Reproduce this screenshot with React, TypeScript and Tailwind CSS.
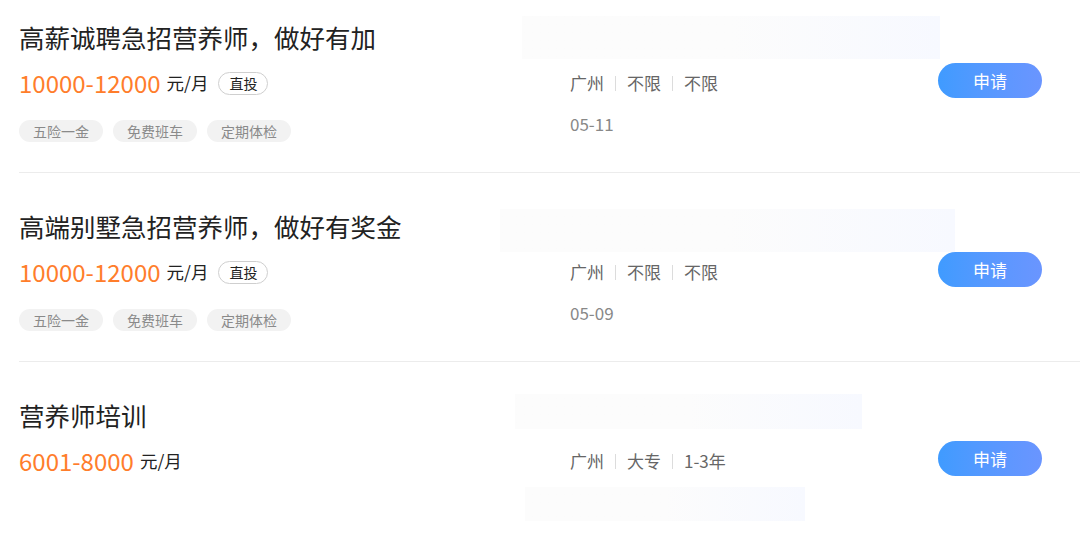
import React from 'react'

type Job = {
  title: string
  salary: string
  direct: boolean
  tags: string[]
  meta: string[]
  date?: string
  rowClass: string
  blurs: string[]
}

const jobs: Job[] = [
  {
    title: '高薪诚聘急招营养师，做好有加',
    salary: '10000-12000',
    direct: true,
    tags: ['五险一金', '免费班车', '定期体检'],
    meta: ['广州', '不限', '不限'],
    date: '05-11',
    rowClass: 'pt-[20px] pb-[30px]',
    blurs: ['left-[522px] top-[16px] w-[418px] h-[43px]'],
  },
  {
    title: '高端别墅急招营养师，做好有奖金',
    salary: '10000-12000',
    direct: true,
    tags: ['五险一金', '免费班车', '定期体检'],
    meta: ['广州', '不限', '不限'],
    date: '05-09',
    rowClass: 'pt-[36px] pb-[30px]',
    blurs: ['left-[500px] top-[36px] w-[455px] h-[43px]'],
  },
  {
    title: '营养师培训',
    salary: '6001-8000',
    direct: false,
    tags: [],
    meta: ['广州', '大专', '1-3年'],
    rowClass: 'pt-[36px] pb-[60px]',
    blurs: [
      'left-[515px] top-[32px] w-[347px] h-[35px]',
      'left-[525px] top-[125px] w-[280px] h-[34px]',
    ],
  },
]

function JobRow({ job, last }: { job: Job; last: boolean }) {
  return (
    <div
      className={
        'relative ml-[19px] flex items-start ' +
        job.rowClass +
        (last ? '' : ' border-b border-[#ececec]')
      }
    >
      {job.blurs.map((b, i) => (
        <div
          key={i}
          className={
            'absolute -translate-x-[19px] bg-gradient-to-r from-[#fcfcfc] via-[#fcfcfc] to-[#f7f9ff] ' +
            b
          }
        />
      ))}

      <div className="relative w-[551px] shrink-0">
        <h2 className="text-[25.5px] leading-[34px] text-[#222]">{job.title}</h2>
        <div className="mt-[13px] flex h-[32px] items-center">
          <span className="text-[24px] leading-[32px] text-[#ff7d2b]">{job.salary}</span>
          <span className="ml-[6px] text-[17.5px] text-[#222]">元/月</span>
          {job.direct && (
            <span className="ml-[10px] flex h-[23px] w-[50px] items-center justify-center rounded-full border border-[#cfcfcf] text-[14px] text-[#222]">
              直投
            </span>
          )}
        </div>
        {job.tags.length > 0 && (
          <div className="mt-[21px] flex gap-[10px]">
            {job.tags.map((t) => (
              <span
                key={t}
                className="flex h-[22px] items-center rounded-full bg-[#f2f2f2] px-[14px] text-[14px] text-[#8a8a8a]"
              >
                {t}
              </span>
            ))}
          </div>
        )}
      </div>

      <div className="relative flex-1 pt-[51px]">
        <div className="flex h-[24px] items-center text-[17px] text-[#666]">
          {job.meta.map((m, i) => (
            <React.Fragment key={i}>
              {i > 0 && <span className="mx-[11px] h-[15px] w-px bg-[#dcdcdc]" />}
              <span>{m}</span>
            </React.Fragment>
          ))}
        </div>
        {job.date && (
          <div className="mt-[17px] h-[24px] text-[17px] leading-[24px] text-[#888]">{job.date}</div>
        )}
      </div>

      <button className="relative mr-[38px] mt-[43px] flex h-[35px] w-[104px] shrink-0 items-center justify-center rounded-full bg-gradient-to-r from-[#3f9bff] to-[#6a95ff] text-[17px] text-white">
        申请
      </button>
    </div>
  )
}

export default function App() {
  return (
    <div
      className="h-[545px] w-[1080px] overflow-hidden bg-white"
      style={{ fontFamily: '"Noto Sans CJK SC", "Noto Sans", sans-serif' }}
    >
      {jobs.map((job, i) => (
        <JobRow key={i} job={job} last={i === jobs.length - 1} />
      ))}
    </div>
  )
}
